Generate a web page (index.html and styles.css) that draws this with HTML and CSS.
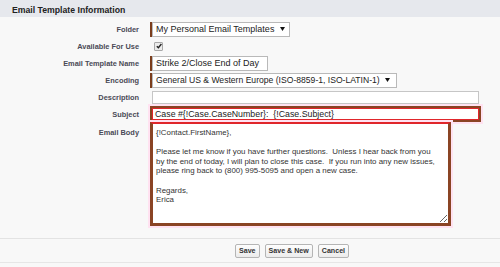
FILE: index.html
```html
<!DOCTYPE html>
<html>
<head>
<meta charset="utf-8">
<link rel="stylesheet" href="styles.css">
</head>
<body>
<div class="section">
  <div class="header">Email Template Information</div>
  <div class="form">
    <div class="label">Folder</div>
    <div class="field">
      <span class="req"></span>
      <div class="select folder">My Personal Email Templates<svg class="arrow" width="5" height="4" viewBox="0 0 5 4"><path d="M0 0H5L2.5 4Z" fill="#111"/></svg></div>
    </div>

    <div class="label">Available For Use</div>
    <div class="field">
      <span class="check"><svg width="6" height="6" viewBox="0 0 6 6"><path d="M0.8 3.2L2.4 4.8L5.4 1" fill="none" stroke="#222" stroke-width="1.4"/></svg></span>
    </div>

    <div class="label">Email Template Name</div>
    <div class="field">
      <span class="req"></span>
      <div class="input name">Strike 2/Close End of Day</div>
    </div>

    <div class="label">Encoding</div>
    <div class="field">
      <span class="req"></span>
      <div class="select encoding">General US &amp; Western Europe (ISO-8859-1, ISO-LATIN-1)<svg class="arrow" width="5" height="4" viewBox="0 0 5 4"><path d="M0 0H5L2.5 4Z" fill="#111"/></svg></div>
    </div>

    <div class="label">Description</div>
    <div class="field">
      <div class="input desc"></div>
    </div>

    <div class="label">Subject</div>
    <div class="field">
      <div class="hl subject"><div class="subject-in">Case #{!Case.CaseNumber}:&nbsp; {!Case.Subject}</div></div>
    </div>

    <div class="label body-label">Email Body</div>
    <div class="field top">
      <div class="hl body-box"><textarea class="body-text">{!Contact.FirstName},

Please let me know if you have further questions.  Unless I hear back from you
by the end of today, I will plan to close this case.  If you run into any new issues,
please ring back to (800) 995-5095 and open a new case.

Regards,
Erica</textarea></div>
    </div>
  </div>
  <div class="buttons">
    <button class="btn">Save</button>
    <button class="btn">Save &amp; New</button>
    <button class="btn">Cancel</button>
  </div>
</div>
</body>
</html>
```

FILE: styles.css
```css
html, body {
  margin: 0;
  padding: 0;
  background: #f8f8f8;
}
body {
  font-family: "Liberation Sans", Arial, sans-serif;
  width: 500px;
  height: 267px;
  overflow: hidden;
}
.section {
  border-bottom: 1px solid #e6e6e6;
  height: 263px;
  box-sizing: border-box;
}
.header {
  height: 17px;
  background: #e6e8ed;
  font-size: 8.7px;
  font-weight: bold;
  color: #222;
  padding-left: 12px;
  line-height: 20px;
  box-sizing: border-box;
}
.form {
  display: grid;
  grid-template-columns: 139px 1fr;
  grid-template-rows: repeat(6, 16px) auto;
  column-gap: 11px;
  row-gap: 1px;
  padding-top: 4px;
}
.label {
  font-size: 7.4px;
  font-weight: bold;
  color: #4a4a56;
  text-align: right;
  display: flex;
  align-items: center;
  justify-content: flex-end;
}
.body-label {
  align-items: flex-start;
  padding-top: 5px;
}
.field {
  display: flex;
  align-items: center;
}
.field.top {
  align-items: flex-start;
  margin-top: -1px;
}
.req {
  width: 2px;
  height: 15px;
  background: #7b3d1c;
}
.select, .input {
  height: 15px;
  box-sizing: border-box;
  background: #fff;
  border: 1px solid #b9b9b9;
  font-size: 9px;
  color: #222;
  display: flex;
  align-items: center;
  padding-left: 3px;
  white-space: nowrap;
}
.select {
  justify-content: space-between;
  padding-right: 4px;
}
.folder { width: 138px; }
.encoding { width: 245px; font-size: 8.6px; padding-right: 6px; }
.name { width: 116px; }
.desc {
  width: 327px;
  height: 13px;
  margin-left: 2px;
  border-color: #c6c6c6;
}
.arrow { flex: none; }
.check {
  margin-left: 4px;
  width: 7px;
  height: 7px;
  border: 1px solid #a8a8a8;
  background: #ececec;
  border-radius: 1px;
  display: flex;
  align-items: center;
  justify-content: center;
}
.hl {
  box-sizing: border-box;
  border: 2px solid #8a4424;
  box-shadow: 0 0 0 2px #ffe2f1;
  background: #fff;
}
.subject {
  width: 331px;
  height: 16px;
}
.subject-in {
  height: 100%;
  box-sizing: border-box;
  border: 1px solid #e0262b;
  font-size: 8.8px;
  color: #222;
  padding-left: 2px;
  line-height: 11px;
  white-space: nowrap;
}
.body-box {
  width: 301px;
  height: 104px;
  border-width: 0 3px 3px 3px;
  border-top: 2px solid #e0262b;
}
.body-text {
  display: block;
  width: 100%;
  height: 100%;
  box-sizing: border-box;
  border: 0;
  margin: 0;
  padding: 4px 3px;
  resize: both;
  background: #fff;
  font-family: "Liberation Sans", Arial, sans-serif;
  font-size: 7.9px;
  line-height: 9.6px;
  color: #333;
  overflow: hidden;
  white-space: pre;
}
.buttons {
  margin-top: 12px;
  border-top: 1px solid #e3e3e3;
  padding: 5px 0 0 235px;
  display: flex;
  gap: 5px;
}
.btn {
  height: 14px;
  padding: 0 3px;
  font-family: "Liberation Sans", Arial, sans-serif;
  font-size: 7.1px;
  font-weight: bold;
  color: #333;
  background: linear-gradient(#fdfdfd, #ececec);
  border: 1px solid #b5b5b5;
  border-radius: 2px;
  line-height: 12px;
}
```
